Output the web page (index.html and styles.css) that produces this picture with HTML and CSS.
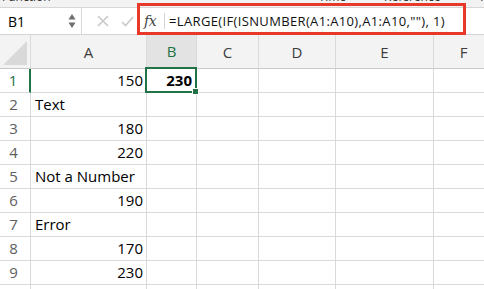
FILE: index.html
```html
<!DOCTYPE html>
<html lang="en">
<head>
    <meta charset="UTF-8">
    <meta name="viewport" content="width=device-width, initial-scale=1.0">
    <title>LARGE with ISNUMBER</title>
    <link rel="stylesheet" href="styles.css">
</head>
<body>

<div class="ribbon-strip">
    <span class="strip-label first">Function</span>
    <span class="strip-label">Time</span>
    <span class="strip-label">Reference</span>
    <span class="strip-label">Trig</span>
</div>

<div class="formula-bar">
    <div class="name-box">
        <span class="name-value">B1</span>
        <span class="spinner">
            <svg width="8" height="16" viewBox="0 0 8 16">
                <path d="M4 1 L7.5 6.5 L0.5 6.5 Z" fill="#6e6e6e"/>
                <path d="M4 15 L7.5 9.5 L0.5 9.5 Z" fill="#6e6e6e"/>
            </svg>
        </span>
    </div>
    <div class="bar-buttons">
        <svg width="12" height="12" viewBox="0 0 12 12">
            <path d="M1 1 L11 11 M11 1 L1 11" stroke="#c9c9c9" stroke-width="1.6" fill="none"/>
        </svg>
        <svg width="13" height="11" viewBox="0 0 13 11">
            <path d="M1 6 L4.5 9.5 L12 1" stroke="#c9c9c9" stroke-width="1.6" fill="none"/>
        </svg>
    </div>
    <div class="formula-area">
        <span class="fx">fx</span>
        <span class="fx-sep"></span>
        <span class="formula-text">=LARGE(IF(ISNUMBER(A1:A10),A1:A10,""), 1)</span>
    </div>
    <div class="highlight-box"></div>
</div>

<div class="sheet">
    <div class="corner"><span class="corner-tri"></span></div>
    <div class="col-head">A</div>
    <div class="col-head active">B</div>
    <div class="col-head">C</div>
    <div class="col-head">D</div>
    <div class="col-head">E</div>
    <div class="col-head">F</div>
</div>

<div id="rows"></div>

<script>
    const data = [
        ['150', '230'],
        ['Text', ''],
        ['180', ''],
        ['220', ''],
        ['Not a Number', ''],
        ['190', ''],
        ['Error', ''],
        ['170', ''],
        ['230', ''],
        ['', '']
    ];

    const rows = document.getElementById('rows');
    data.forEach((row, i) => {
        const line = document.createElement('div');
        line.className = 'sheet';
        const isNum = v => v !== '' && !isNaN(v);
        line.innerHTML = `
            <div class="row-head${i === 0 ? ' active' : ''}">${i + 1}</div>
            <div class="cell${isNum(row[0]) ? ' num' : ''}">${row[0]}</div>
            <div class="cell num${i === 0 ? ' selected' : ''}">${row[1]}${i === 0 ? '<span class="fill-handle"></span>' : ''}</div>
            <div class="cell"></div>
            <div class="cell"></div>
            <div class="cell"></div>
            <div class="cell"></div>
        `;
        rows.appendChild(line);
    });
</script>

</body>
</html>
```

FILE: styles.css
```css
body {
    margin: 0;
    width: 484px;
    height: 289px;
    overflow: hidden;
    background: #ffffff;
    font-family: "Open Sans", "Liberation Sans", sans-serif;
    color: #000000;
}
.ribbon-strip {
    height: 7px;
    overflow: hidden;
    background: #f2f2f2;
    border-bottom: 1px solid #d6d6d6;
    display: flex;
    font-size: 12px;
    line-height: 12px;
    color: #333;
}
.strip-label {
    margin-top: -9px;
    margin-left: 38px;
}
.strip-label.first {
    margin-left: 2px;
    margin-right: 230px;
}
.formula-bar {
    position: relative;
    height: 26px;
    display: flex;
    align-items: stretch;
    border-bottom: 1px solid #d4d4d4;
    background: #ffffff;
}
.name-box {
    width: 82px;
    border-right: 1px solid #d8d8d8;
    display: flex;
    align-items: center;
    justify-content: space-between;
    padding: 0 5px 0 8px;
    box-sizing: border-box;
}
.name-value {
    font-size: 14px;
}
.spinner {
    display: flex;
}
.bar-buttons {
    width: 54px;
    display: flex;
    align-items: center;
    gap: 12px;
    padding-left: 15px;
    box-sizing: border-box;
}
.formula-area {
    flex: 1;
    display: flex;
    align-items: center;
    padding-left: 8px;
}
.fx {
    font-family: "DejaVu Serif", "Liberation Serif", serif;
    font-style: italic;
    font-size: 14px;
    color: #444;
    letter-spacing: -0.5px;
}
.fx-sep {
    width: 1px;
    height: 16px;
    background: #d4d4d4;
    margin: 0 4px 0 8px;
}
.formula-text {
    font-size: 13px;
    letter-spacing: 0.35px;
    color: #111;
}
.highlight-box {
    position: absolute;
    left: 137px;
    top: -5px;
    width: 329px;
    height: 32px;
    border: 3px solid #e8382a;
    box-sizing: border-box;
}
.sheet {
    display: grid;
    grid-template-columns: 31px 116px 50px 62px 77px 98px 60px;
}
.corner, .col-head {
    height: 34px;
    box-sizing: border-box;
    background: #f3f3f3;
    border-right: 1px solid #dadada;
    border-bottom: 1px solid #c8c8c8;
}
.corner {
    position: relative;
}
.corner-tri {
    position: absolute;
    right: 3px;
    bottom: 3px;
    width: 0;
    height: 0;
    border-left: 24px solid transparent;
    border-bottom: 24px solid #d9d9d9;
}
.col-head {
    display: flex;
    align-items: center;
    justify-content: center;
    font-size: 15px;
    color: #3c3c3c;
}
.col-head.active {
    background: #e3e3e3;
    color: #217346;
    border-bottom: 2px solid #217346;
}
.row-head, .cell {
    height: 24px;
    box-sizing: border-box;
    border-right: 1px solid #dadada;
    border-bottom: 1px solid #dadada;
    font-size: 15px;
    line-height: 23px;
}
.row-head {
    text-align: center;
    padding-right: 3px;
    color: #5e5e5e;
    background: #ffffff;
}
.row-head.active {
    color: #217346;
    border-right: 2px solid #217346;
}
.cell {
    padding: 0 4px;
    white-space: nowrap;
}
.cell.num {
    text-align: right;
    padding-right: 3px;
}
.cell.selected {
    position: relative;
    font-weight: bold;
    padding-right: 4px;
}
.cell.selected::after {
    content: "";
    position: absolute;
    left: -2px;
    top: -2px;
    right: -1px;
    bottom: -1px;
    border: 2px solid #217346;
}
.fill-handle {
    position: absolute;
    right: -3px;
    bottom: -3px;
    width: 5px;
    height: 5px;
    background: #217346;
    border: 1px solid #ffffff;
    z-index: 1;
}
```
